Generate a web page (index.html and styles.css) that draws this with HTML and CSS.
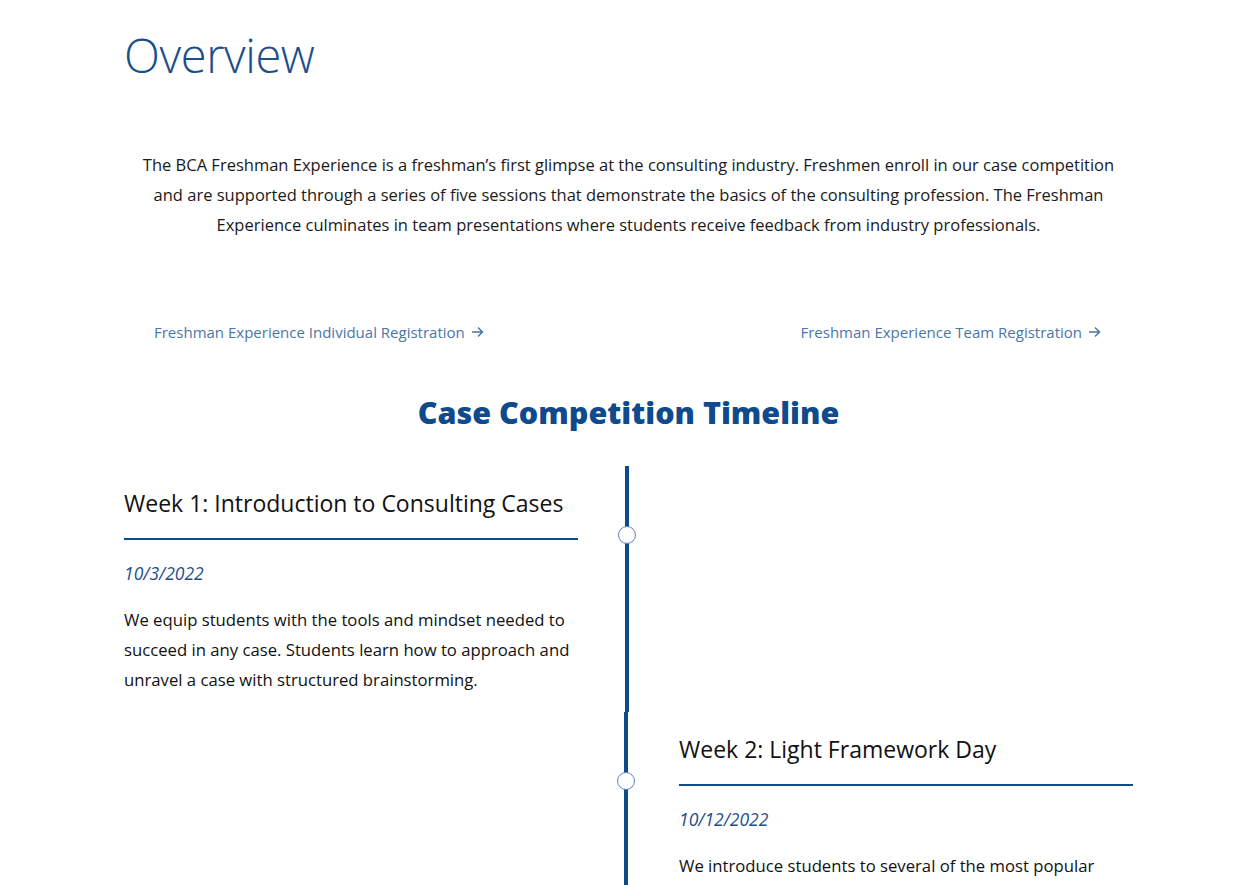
FILE: index.html
```html
<!DOCTYPE html>
<html lang="en">
<head>
<meta charset="utf-8">
<title>Freshman Experience</title>
<link rel="stylesheet" href="styles.css">
</head>
<body>
<main class="container">
  <h1 class="page-title">Overview</h1>
  <p class="intro">The BCA Freshman Experience is a freshman’s first glimpse at the consulting industry. Freshmen enroll in our case competition and are supported through a series of five sessions that demonstrate the basics of the consulting profession. The Freshman Experience culminates in team presentations where students receive feedback from industry professionals.</p>
  <div class="links">
    <a class="reg-link" href="#">Freshman Experience Individual Registration <svg class="arrow" width="13" height="12" viewBox="0 0 13 12"><path d="M1 6h10.5M7 1.5L11.5 6 7 10.5" fill="none" stroke="currentColor" stroke-width="1.5"/></svg></a>
    <a class="reg-link" href="#">Freshman Experience Team Registration <svg class="arrow" width="13" height="12" viewBox="0 0 13 12"><path d="M1 6h10.5M7 1.5L11.5 6 7 10.5" fill="none" stroke="currentColor" stroke-width="1.5"/></svg></a>
  </div>
  <h2 class="timeline-title">Case Competition Timeline</h2>
  <section class="timeline">
    <div class="tl-row tl-left">
      <article class="tl-card">
        <h3 class="tl-heading">Week 1: Introduction to Consulting Cases</h3>
        <p class="tl-date">10/3/2022</p>
        <p class="tl-text">We equip students with the tools and mindset needed to succeed in any case. Students learn how to approach and unravel a case with structured brainstorming.</p>
      </article>
      <span class="tl-dot"></span>
    </div>
    <div class="tl-row tl-right">
      <article class="tl-card">
        <h3 class="tl-heading">Week 2: Light Framework Day</h3>
        <p class="tl-date">10/12/2022</p>
        <p class="tl-text">We introduce students to several of the most popular frameworks used in consulting and how to adapt them to a case.</p>
      </article>
      <span class="tl-dot"></span>
    </div>
  </section>
</main>
</body>
</html>
```
FILE: styles.css
```css
* { box-sizing: border-box; }
html, body { margin: 0; padding: 0; background: #fff; }
body {
  font-family: "Open Sans", "Noto Sans", "Liberation Sans", sans-serif;
  color: #111;
}
.container {
  width: 1009px;
  margin: 0 auto;
}
.page-title {
  margin: 0;
  padding-top: 22px;
  font-size: 47px;
  font-weight: 300;
  line-height: 66px;
  color: #1b4f8c;
  letter-spacing: -0.4px;
}
.intro {
  margin: 62px 0 0;
  padding: 0 16px;
  text-align: center;
  font-size: 16.5px;
  line-height: 30px;
  color: #1a1a1a;
}
.links {
  display: flex;
  justify-content: space-between;
  padding: 0 32px 0 30px;
  margin-top: 82px;
}
.reg-link {
  display: inline-flex;
  align-items: center;
  gap: 6px;
  font-size: 15px;
  line-height: 20px;
  color: #4a76a8;
  text-decoration: none;
}
.arrow { display: block; }
.timeline-title {
  margin: 50px 0 0;
  text-align: center;
  font-size: 30.5px;
  font-weight: 800;
  line-height: 40px;
  color: #0e4a8c;
}
.timeline { margin-top: 34px; }
.tl-row {
  position: relative;
  display: flex;
  height: 246px;
}
.tl-left .tl-card {
  width: 505px;
  padding-right: 47px;
  border-right: 4px solid #0e4a8c;
}
.tl-right .tl-card {
  margin-left: 500px;
  width: 509px;
  padding-left: 51px;
  border-left: 4px solid #0e4a8c;
}
.tl-heading {
  margin: 0;
  padding-top: 20px;
  padding-bottom: 18px;
  font-size: 23px;
  font-weight: 400;
  line-height: 34px;
  color: #111;
  border-bottom: 2px solid #0e4a8c;
}
.tl-date {
  margin: 18px 0 0;
  font-size: 17.5px;
  font-style: italic;
  line-height: 30px;
  color: #1e4d8c;
}
.tl-text {
  margin: 17px 0 0;
  font-size: 16.7px;
  line-height: 30px;
  color: #111;
}
.tl-dot {
  position: absolute;
  top: 60px;
  width: 18px;
  height: 18px;
  border-radius: 50%;
  background: #fff;
  border: 1.5px solid #5b87b6;
}
.tl-left .tl-dot { left: 494px; }
.tl-right .tl-dot { left: 493px; }
```
